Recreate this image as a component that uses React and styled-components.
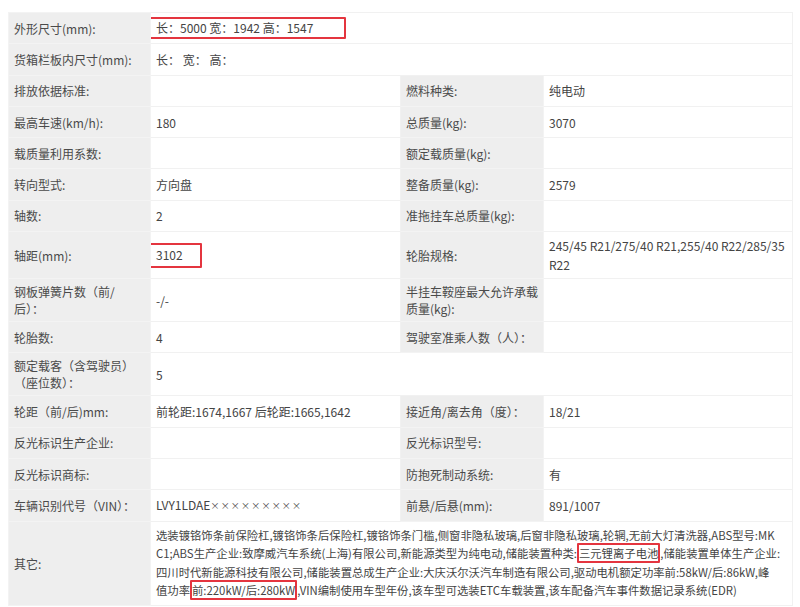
import React from "react"
import styled, { createGlobalStyle } from "styled-components"

const GlobalStyle = createGlobalStyle`
  html, body {
    margin: 0;
    padding: 0;
    background: #ffffff;
  }
  body {
    padding: 8px;
    font-family: "Noto Sans CJK SC", "Noto Sans", sans-serif;
    font-size: 12px;
    color: #444;
  }
`

const SpecTable = styled.table`
  width: 784px;
  margin-top: 4px;
  border-collapse: collapse;
  table-layout: fixed;
`

const Cell = styled.td`
  height: 22.3px;
  padding: 4px 5px;
  line-height: ${({ $lh }) => $lh || "17px"};
  border: 1px solid #f1f1f1;
  vertical-align: middle;
  text-align: left;
  white-space: nowrap;
  overflow: hidden;
`

const Label = styled(Cell)`
  background: #eeeeee;
  color: #4a4a4a;
  font-weight: 400;
  border-color: #f3f3f3;
`

const Value = styled(Cell)`
  background: #ffffff;
  color: #444;
`

const Notes = styled(Value)`
  padding: 4px 5px 5px;
  line-height: 18.5px;
  font-size: 11.35px;
`

const Boxed = styled.span`
  display: inline-block;
  margin-left: ${({ $ml }) => $ml || "0"};
  padding: ${({ $pad }) => $pad || "0"};
  line-height: 18px;
  border: 2px solid #e4353f;
  border-radius: 1px;
`

const InlineMark = styled.span`
  border: 2px solid #e4353f;
  border-radius: 1px;
  padding: 0;
`

const Masked = styled.span`
  font-size: 9px;
  letter-spacing: 1.2px;
  vertical-align: 1px;
`

const Row = ({ a, b, c, d }) => (
  <tr>
    <Label as="th">{a}</Label>
    <Value>{b}</Value>
    <Label as="th">{c}</Label>
    <Value>{d}</Value>
  </tr>
)

export default function App() {
  return (
    <>
      <GlobalStyle />
      <SpecTable>
        <colgroup>
          <col style={{ width: 142 }} />
          <col style={{ width: 250 }} />
          <col style={{ width: 143 }} />
          <col style={{ width: 249 }} />
        </colgroup>
        <tbody>
          <tr>
            <Label as="th">外形尺寸(mm):</Label>
            <Value colSpan={3}>
              <Boxed $ml="-10px" $pad="0 31px 0 8px">
                长：5000 宽：1942 高：1547
              </Boxed>
            </Value>
          </tr>
          <tr>
            <Label as="th">货箱栏板内尺寸(mm):</Label>
            <Value colSpan={3}>长：&nbsp;宽：&nbsp;高：</Value>
          </tr>
          <Row a="排放依据标准:" b="" c="燃料种类:" d="纯电动" />
          <Row a="最高车速(km/h):" b="180" c="总质量(kg):" d="3070" />
          <Row a="载质量利用系数:" b="" c="额定载质量(kg):" d="" />
          <Row a="转向型式:" b="方向盘" c="整备质量(kg):" d="2579" />
          <Row a="轴数:" b="2" c="准拖挂车总质量(kg):" d="" />
          <tr>
            <Label as="th">轴距(mm):</Label>
            <Value>
              <Boxed $ml="-7px" $pad="1px 17px 2px 5px">3102</Boxed>
            </Value>
            <Label as="th">轮胎规格:</Label>
            <Value $lh="19px">
              245/45 R21/275/40 R21,255/40 R22/285/35
              <br />
              R22
            </Value>
          </tr>
          <Row
            a={
              <>
                钢板弹簧片数（前/
                <br />
                后）：
              </>
            }
            b="-/-"
            c={
              <>
                半挂车鞍座最大允许承载
                <br />
                质量(kg):
              </>
            }
            d=""
          />
          <Row a="轮胎数:" b="4" c="驾驶室准乘人数（人）：" d="" />
          <tr>
            <Label as="th">
              额定载客（含驾驶员）
              <br />
              （座位数）：
            </Label>
            <Value colSpan={3}>5</Value>
          </tr>
          <Row
            a="轮距（前/后)mm:"
            b="前轮距:1674,1667 后轮距:1665,1642"
            c="接近角/离去角（度）："
            d="18/21"
          />
          <Row a="反光标识生产企业:" b="" c="反光标识型号:" d="" />
          <Row a="反光标识商标:" b="" c="防抱死制动系统:" d="有" />
          <Row
            a="车辆识别代号（VIN）："
            b={
              <>
                LVY1LDAE<Masked>×××××××××</Masked>
              </>
            }
            c="前悬/后悬(mm):"
            d="891/1007"
          />
          <tr>
            <Label as="th">其它:</Label>
            <Notes colSpan={3}>
              选装镀铬饰条前保险杠,镀铬饰条后保险杠,镀铬饰条门槛,侧窗非隐私玻璃,后窗非隐私玻璃,轮辋,无前大灯清洗器,ABS型号:MK
              <br />
              C1;ABS生产企业:致摩威汽车系统(上海)有限公司,新能源类型为纯电动,储能装置种类:
              <InlineMark>三元锂离子电池</InlineMark>,储能装置单体生产企业:
              <br />
              四川时代新能源科技有限公司,储能装置总成生产企业:大庆沃尔沃汽车制造有限公司,驱动电机额定功率前:58kW/后:86kW,峰
              <br />
              值功率<InlineMark>前:220kW/后:280kW</InlineMark>,VIN编制使用车型年份,该车型可选装ETC车载装置,该车配备汽车事件数据记录系统(EDR)
            </Notes>
          </tr>
        </tbody>
      </SpecTable>
    </>
  )
}
